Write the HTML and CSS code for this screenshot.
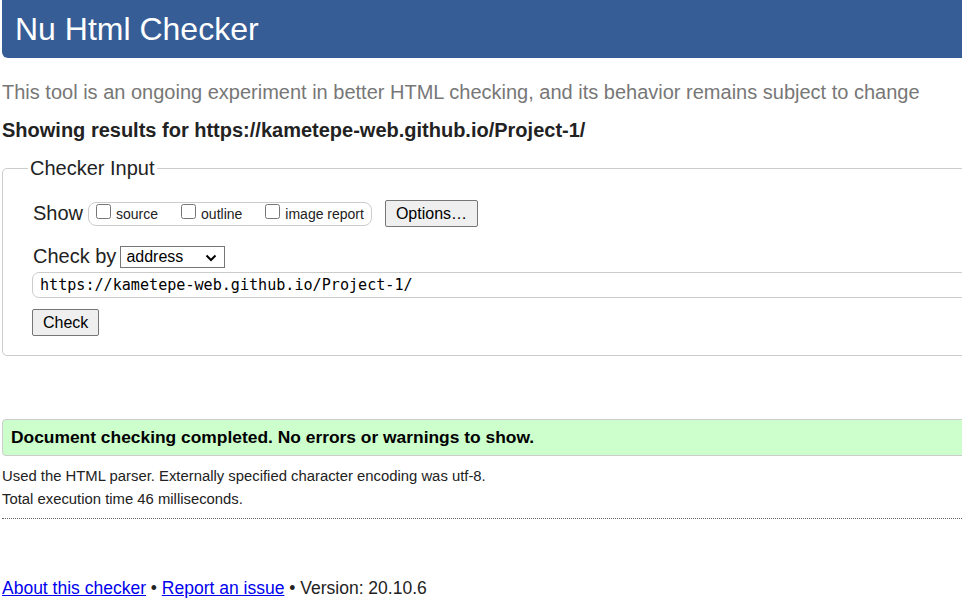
FILE: index.html
```html
<!DOCTYPE html>
<html lang="en">
<head>
<meta charset="utf-8">
<title>Showing results for https://kametepe-web.github.io/Project-1/ - Nu Html Checker</title>
<link rel="stylesheet" href="styles.css">
</head>
<body>
<div class="page">
  <h1 class="title">Nu Html Checker</h1>
  <p class="intro">This tool is an ongoing experiment in better HTML checking, and its behavior remains subject to change</p>
  <p class="showing">Showing results for https://kametepe-web.github.io/Project-1/</p>
  <form class="form">
    <fieldset class="checker">
      <legend class="legend">Checker Input</legend>
      <div class="inner">
        <div class="row show-row">
          <span class="lbl">Show</span>
          <span class="opts">
            <label class="opt"><input type="checkbox" class="cb"><span class="opt-text">source</span></label>
            <label class="opt"><input type="checkbox" class="cb"><span class="opt-text">outline</span></label>
            <label class="opt last"><input type="checkbox" class="cb"><span class="opt-text">image report</span></label>
          </span>
          <button type="button" class="btn options">Options…</button>
        </div>
        <div class="row by-row">
          <label class="lbl">Check by</label>
          <span class="select-wrap">
            <select class="select">
              <option>address</option>
              <option>file upload</option>
              <option>text input</option>
            </select>
            <svg class="chev" width="12" height="8" viewBox="0 0 12 8"><path d="M1.5 1.5 L6 6 L10.5 1.5" fill="none" stroke="#000" stroke-width="2"/></svg>
          </span>
        </div>
        <input class="url" type="url" value="https://kametepe-web.github.io/Project-1/">
        <div class="submit-row"><button type="button" class="btn check">Check</button></div>
      </div>
    </fieldset>
  </form>
  <div class="success"><p class="success-text">Document checking completed. No errors or warnings to show.</p></div>
  <p class="meta first">Used the HTML parser. Externally specified character encoding was utf-8.</p>
  <p class="meta">Total execution time 46 milliseconds.</p>
  <hr class="dotted">
  <p class="footer"><a href="#" class="link">About this checker</a> • <a href="#" class="link">Report an issue</a> • Version: 20.10.6</p>
</div>
</body>
</html>
```
FILE: styles.css
```css
html, body {
  margin: 0;
  padding: 0;
  overflow: hidden;
  background: #fff;
}
body {
  font-family: "Liberation Sans", Arial, sans-serif;
  color: #222;
}
.page {
  width: 1300px;
  padding-left: 2px;
  display: flex;
  flex-direction: column;
}
.title {
  margin: 0;
  height: 58px;
  line-height: 58px;
  padding-left: 13px;
  background: #365d95;
  color: #fff;
  font-size: 32px;
  font-weight: normal;
  border-radius: 0 0 6px 6px;
}
.intro {
  margin: 23px 0 0;
  font-size: 20px;
  line-height: 23px;
  color: #777;
}
.showing {
  margin: 15px 0 0;
  font-size: 20px;
  line-height: 23px;
  font-weight: bold;
  color: #222;
}
.form {
  margin: 15px 0 0;
}
.checker {
  margin: 0;
  border: 1px solid #ccc;
  border-radius: 5px;
  padding: 0 0 19px 29px;
  min-width: 0;
}
.legend {
  margin-left: -4px;
  padding: 0 2px;
  font-size: 20px;
  line-height: 23px;
  color: #222;
}
.inner {
  display: flex;
  flex-direction: column;
  align-items: flex-start;
  padding-top: 20px;
}
.row {
  display: flex;
  align-items: center;
}
.show-row {
  height: 27px;
}
.lbl {
  font-size: 20px;
  line-height: 23px;
  color: #222;
  padding-left: 1px;
}
.opts {
  display: flex;
  align-items: flex-start;
  margin-left: 5px;
  height: 22px;
  border: 1px solid #ccc;
  border-radius: 8px;
  padding: 0 7px 0 3px;
}
.opt {
  display: flex;
  align-items: flex-start;
  margin-right: 19px;
  font-size: 14px;
  color: #222;
}
.opt.last {
  margin-right: 0;
}
.cb {
  width: 15px;
  height: 15px;
  margin: 1px 5px 0 4px;
}
.opt-text {
  line-height: 20px;
  padding-top: 1px;
}
.btn {
  font-family: "Liberation Sans", Arial, sans-serif;
  font-size: 16px;
  color: #000;
  background: #efefef;
  border: 1px solid #767676;
  border-radius: 2px;
  height: 27px;
  padding: 0 10px;
}
.options {
  margin-left: 13px;
  width: 93px;
}
.by-row {
  margin-top: 18px;
}
.select-wrap {
  position: relative;
  margin-left: 4px;
  display: inline-block;
}
.select {
  appearance: none;
  -webkit-appearance: none;
  width: 105px;
  height: 22px;
  font-family: "Liberation Sans", Arial, sans-serif;
  font-size: 16px;
  color: #000;
  background: #fff;
  border: 1px solid #767676;
  border-radius: 0;
  padding: 0 0 0 5px;
  display: block;
}
.chev {
  position: absolute;
  right: 8px;
  top: 8px;
  pointer-events: none;
}
.url {
  margin-top: 4px;
  width: 100%;
  box-sizing: border-box;
  height: 26px;
  border: 1px solid #ccc;
  border-radius: 7px;
  padding: 0 0 0 7px;
  font-family: "DejaVu Sans Mono", monospace;
  font-size: 15.1px;
  color: #000;
  background: #fff;
}
.submit-row {
  margin-top: 11px;
}
.check {
  width: 67px;
}
.success {
  margin-top: 63px;
  background: #ccffcc;
  border: 1px solid #ccc;
  border-radius: 4px;
  padding: 7px 8px 8px;
}
.success-text {
  margin: 0;
  font-size: 17.4px;
  line-height: 20px;
  font-weight: bold;
  color: #000;
}
.meta {
  margin: 6px 0 0;
  font-size: 14.85px;
  line-height: 17px;
  color: #222;
}
.meta.first {
  margin-top: 12px;
}
.dotted {
  margin: 10px 0 0;
  border: none;
  border-top: 1px dotted #666;
  height: 0;
}
.footer {
  margin: 59px 0 0;
  font-size: 17.5px;
  line-height: 20px;
  color: #222;
}
.link {
  color: #0000ee;
  text-decoration: underline;
}
```
